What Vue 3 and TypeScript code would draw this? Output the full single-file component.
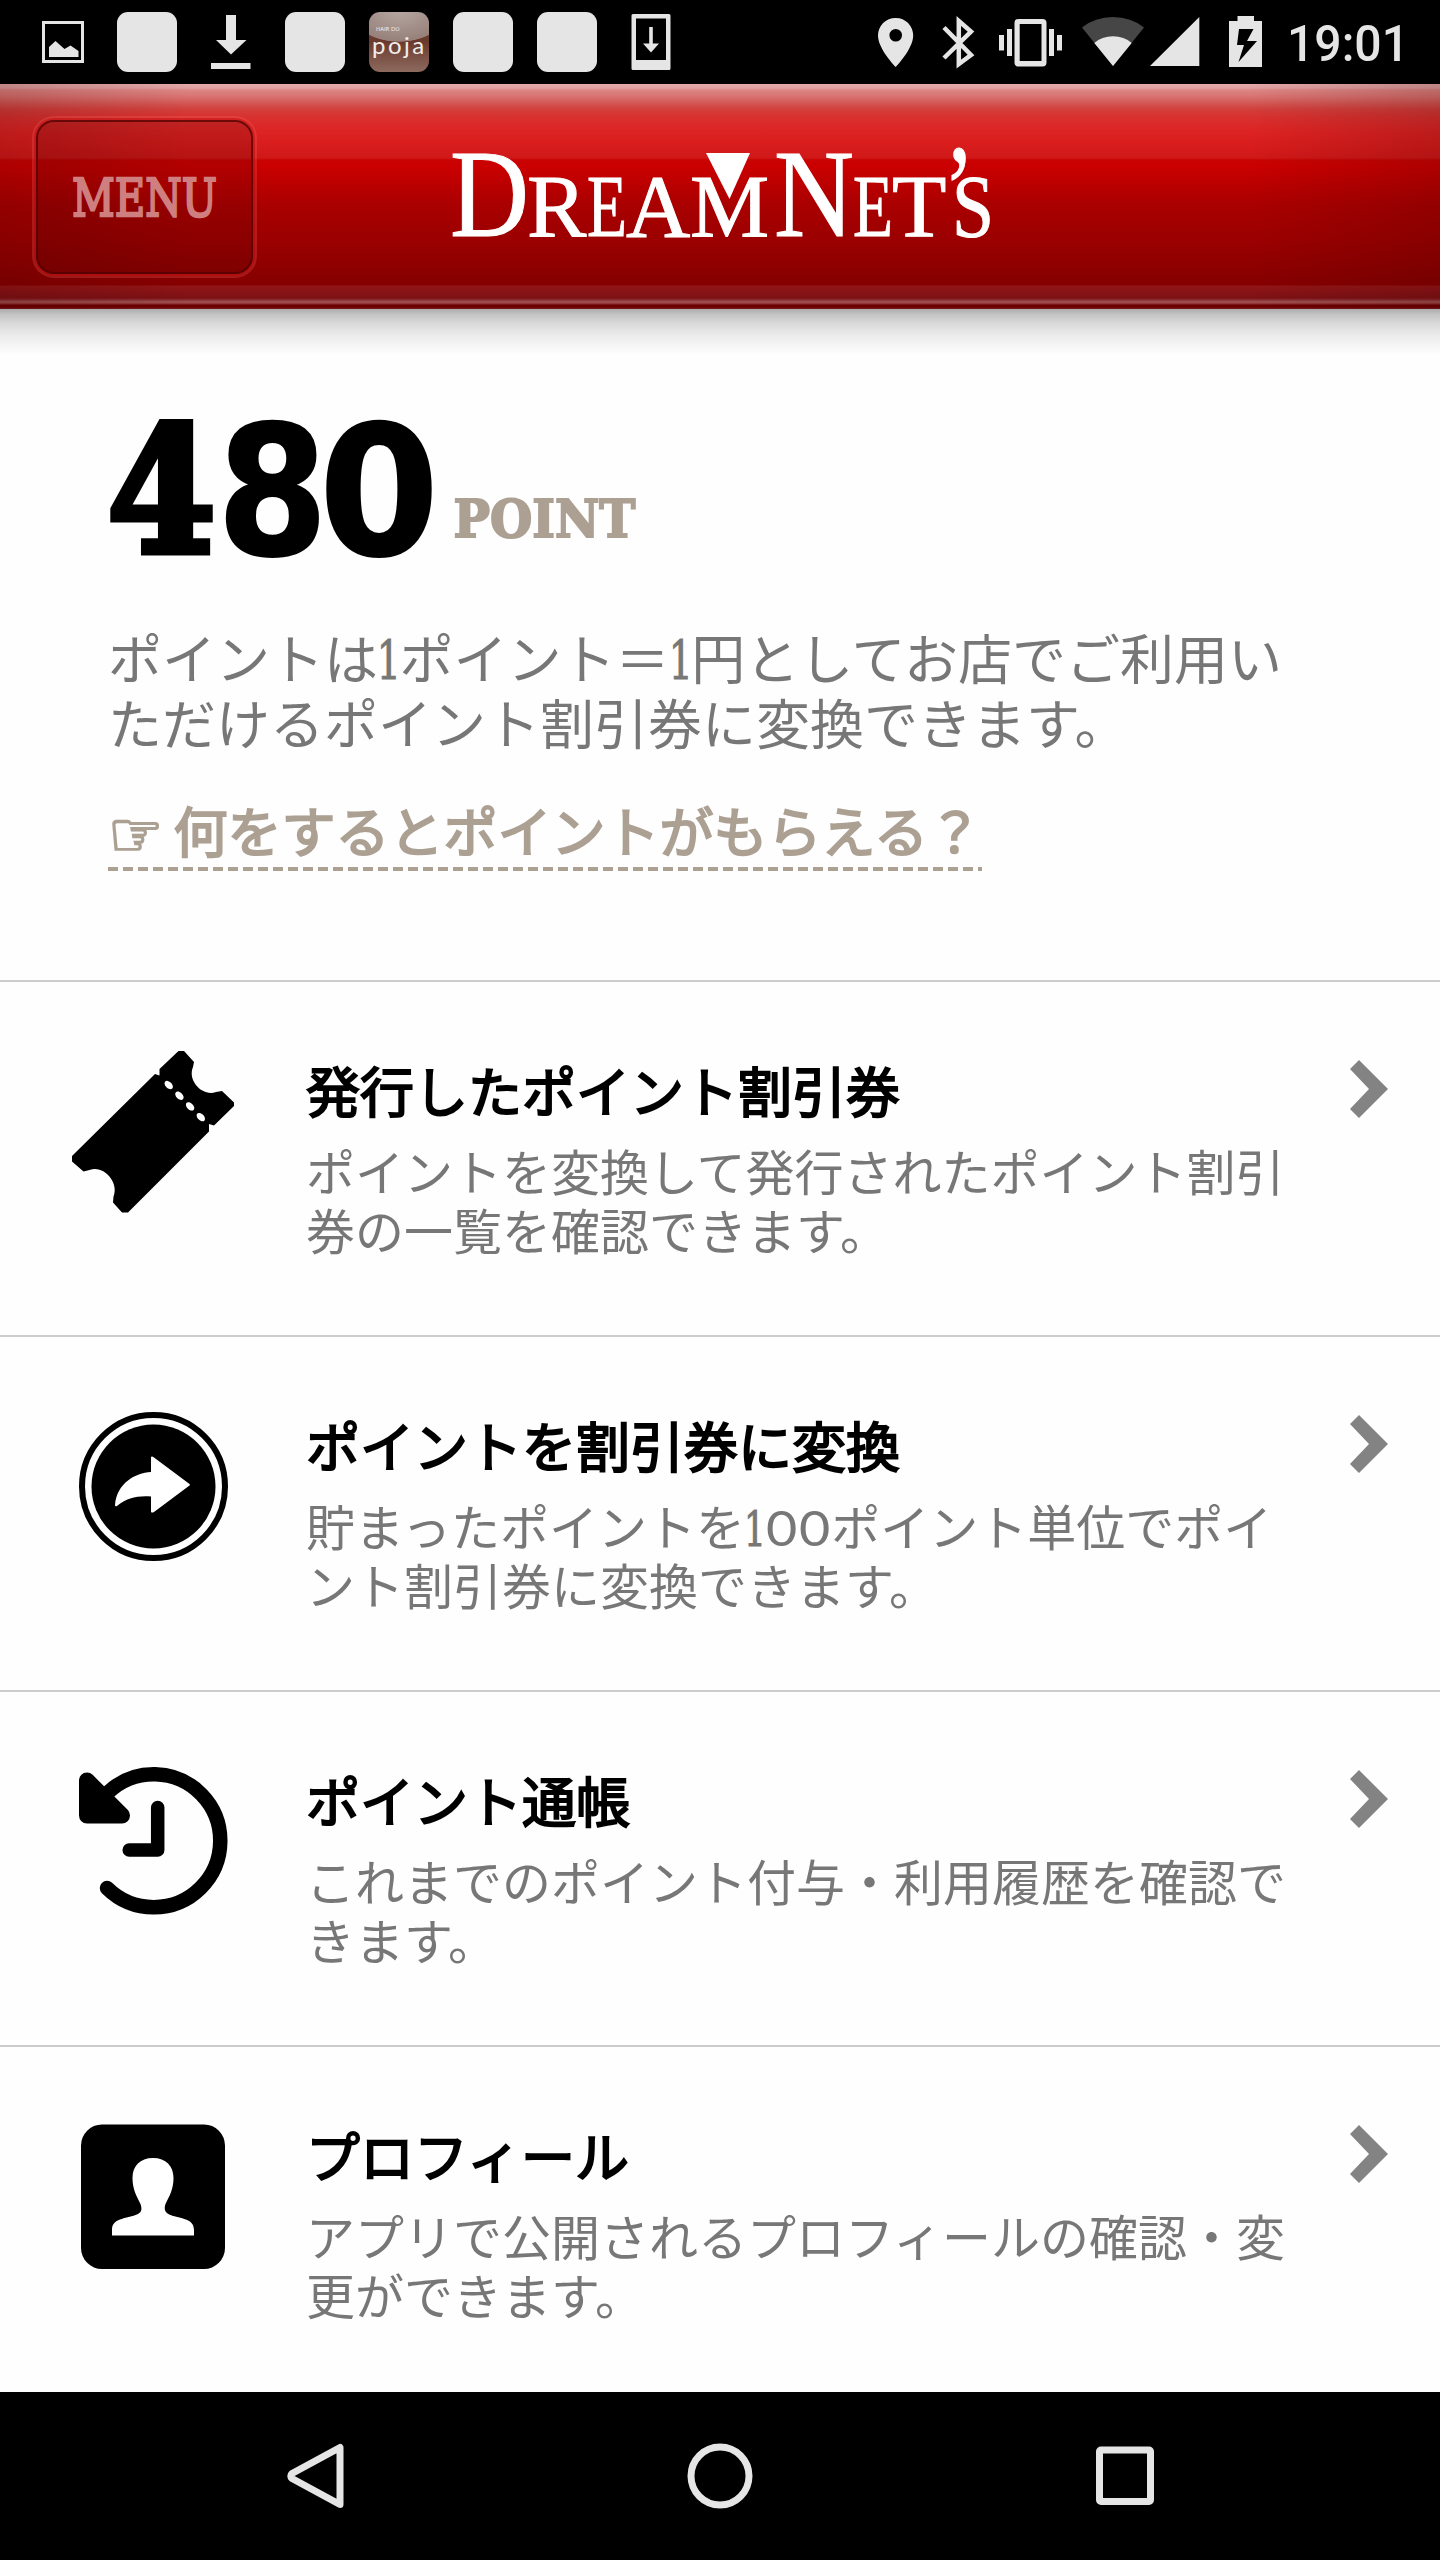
<script setup lang="ts">
interface MenuRow {
  icon: 'ticket' | 'convert' | 'history' | 'profile'
  title: string
  lines: string[]
}

const rows: MenuRow[] = [
  { icon: 'ticket', title: '発行したポイント割引券', lines: ['ポイントを変換して発行されたポイント割引', '券の一覧を確認できます。'] },
  { icon: 'convert', title: 'ポイントを割引券に変換', lines: ['貯まったポイントを100ポイント単位でポイ', 'ント割引券に変換できます。'] },
  { icon: 'history', title: 'ポイント通帳', lines: ['これまでのポイント付与・利用履歴を確認で', 'きます。'] },
  { icon: 'profile', title: 'プロフィール', lines: ['アプリで公開されるプロフィールの確認・変', '更ができます。'] },
]

const intro: string[] = ['ポイントは1ポイント＝1円としてお店でご利用い', 'ただけるポイント割引券に変換できます。']

// Splits a line so that every digit can take the slab numeral style.
const pieces = (line: string): string[] => line.split(/(\d)/).filter((p) => p !== '')
const digitClass = (p: string): string => (/^\d$/.test(p) ? (p === '1' ? 'one' : 'zero') : 'run')
</script>

<template>
  <div class="screen">
    <div class="status">
      <div class="notes">
        <span class="cell">
          <svg width="42" height="42" viewBox="0 0 42 42"><rect x="1.5" y="1.5" width="39" height="39" fill="none" stroke="#e5e5e5" stroke-width="3" /><path d="M7 26l6.500-6 9 8 6-3.500 8 5.500v6H7z" fill="#e5e5e5" /></svg>
        </span>
        <span class="cell"><i class="blank"></i></span>
        <span class="cell">
          <svg width="40" height="54" viewBox="0 0 40 54"><path d="M15 0h10v25h10.500L20 39.500 5 25h10zM0 48h39.500v6H0z" fill="#e5e5e5" /></svg>
        </span>
        <span class="cell"><i class="blank"></i></span>
        <span class="cell"><span class="poja"><small>HAIR DO</small><b>poja</b></span></span>
        <span class="cell"><i class="blank"></i></span>
        <span class="cell"><i class="blank"></i></span>
        <span class="cell">
          <svg width="40" height="56" viewBox="0 0 40 56"><path fill-rule="evenodd" d="M2 0h36q1.500 0 1.500 1.500v53q0 1.500-1.500 1.500H2q-1.500 0-1.500-1.500v-53Q.5 0 2 0zM5 4.500V46h30V4.500z" fill="#e5e5e5" /><path d="M18.200 13h3.600v16.500h6.200l-8 9-8-9h6.200z" fill="#e5e5e5" /></svg>
        </span>
      </div>
      <div class="system">
        <svg width="528" height="84" viewBox="878 0 528 84" fill="#e5e5e5">
          <path fill-rule="evenodd" d="M895.700 18c-10 0-17.700 7.800-17.700 17.500C878 49 895.700 67 895.700 67s17.500-18 17.500-31.500c0-9.700-7.700-17.500-17.500-17.500zm0 11a6.300 6.300 0 1 1 0 12.600 6.300 6.300 0 0 1 0-12.600z" />
          <path d="M944 27.500l27 27.500-12.200 9V21l12.200 10.500L944 58" fill="none" stroke="#e5e5e5" stroke-width="4.500" />
          <path fill-rule="evenodd" d="M1018.500 19h24q4 0 4 4v39.500q0 4-4 4h-24q-4 0-4-4V23q0-4 4-4zm1.200 5v37h21.800V24zM999 35h5v15.500h-5zM1007 29h5v27h-5zM1049 29h5v27h-5zM1057 35h5v15.500h-5z" />
          <path d="M1113 66l-31-38.500q13-10.500 31-10.500t31 10.500z" fill="#464646" />
          <path d="M1113 66l-18.700-23q7.500-6.700 18.700-6.700t18.700 6.700z" />
          <path d="M1199.300 17v49H1150z" />
          <path fill-rule="evenodd" d="M1237.500 16h16.500v5h8v46h-33V21h8.500zM1239 29l-2 16h7l-5.500 17 18.500-21h-10l6.500-12z" />
          <text x="1287" y="61.300" font-family="Roboto, sans-serif" font-size="49.500" font-weight="500" textLength="122" lengthAdjust="spacingAndGlyphs">19:01</text>
        </svg>
      </div>
    </div>

    <header class="bar">
      <button class="menu">
        <svg width="150" height="60" viewBox="-2 -8 150 60"><text x="0" y="41" font-family="'DejaVu Serif', serif" font-size="53" textLength="145" lengthAdjust="spacingAndGlyphs" fill="#cf7f7f" stroke="#cf7f7f" stroke-width="2.400">MENU</text></svg>
      </button>
      <svg class="logo" width="546" height="100" viewBox="448 142 546 100">
        <text y="236" font-family="'Liberation Serif', serif" fill="#fff" stroke="#fff" stroke-width="1"><tspan x="450" font-size="124" textLength="79" lengthAdjust="spacingAndGlyphs">D</tspan><tspan x="527" font-size="89">R</tspan><tspan x="587" font-size="89" textLength="40" lengthAdjust="spacingAndGlyphs">E</tspan><tspan x="626" font-size="89">A</tspan><tspan x="690" font-size="89">M</tspan><tspan x="774" font-size="124" textLength="80" lengthAdjust="spacingAndGlyphs">N</tspan><tspan x="853" font-size="89" textLength="40" lengthAdjust="spacingAndGlyphs">E</tspan><tspan x="892" font-size="89">T</tspan><tspan x="944" y="231" font-size="124" textLength="30" lengthAdjust="spacingAndGlyphs">’</tspan><tspan x="952" y="236" font-size="89" textLength="42" lengthAdjust="spacingAndGlyphs">S</tspan></text>
        <path d="M706 153h44l-20.500 46z" fill="#fff" />
      </svg>
    </header>

    <main>
      <section class="summary">
        <svg class="points" width="540" height="150" viewBox="108 415 540 150">
          <text y="555" font-size="182" font-weight="700" font-family="'DejaVu Sans', sans-serif" fill="#000"><tspan x="107" y="552" font-size="175" font-family="'DejaVu Serif', serif" textLength="109" lengthAdjust="spacingAndGlyphs" stroke="#000" stroke-width="7">4</tspan><tspan x="217" y="554" font-size="180" textLength="111" lengthAdjust="spacingAndGlyphs" stroke="#000" stroke-width="2">8</tspan><tspan x="319" y="554" font-size="180" textLength="120" lengthAdjust="spacingAndGlyphs" stroke="#000" stroke-width="2">0</tspan></text>
          <text x="453.500" y="537" font-size="53" font-weight="700" font-family="'DejaVu Serif', serif" fill="#aca093" stroke="#aca093" stroke-width="2" textLength="182" lengthAdjust="spacingAndGlyphs">POINT</text>
        </svg>
        <p class="intro">
          <span v-for="line in intro" :key="line" class="line"><span v-for="(p, i) in pieces(line)" :key="i" :class="digitClass(p)">{{ p }}</span></span>
        </p>
        <a class="how"><span class="hand">☞</span>何をするとポイントがもらえる？</a>
      </section>

      <section v-for="row in rows" :key="row.title" class="row">
        <div class="pic">
          <svg v-if="row.icon === 'ticket'" width="186" height="186" viewBox="60 1039 186 186">
            <path d="M178.500 1051h5.500l10 11-1 5c-6 14 10 30 23 25l6-1 12 11.500v3.500l-20 19.500-5-1.500 0 7.500-81 81h-6l-9-10 .5-6c6-14-10-32-24-26.500l-6 1.500-11.500-10v-5.500l83-82 4.500 1.500v-6.500z" />
            <g fill="#fff"><ellipse v-for="n in 4" :key="n" :cx="158 + n * 10.700" :cy="1074.300 + n * 10.700" rx="5" ry="3.200" :transform="`rotate(45 ${158 + n * 10.700} ${1074.300 + n * 10.700})`" /></g>
          </svg>
          <svg v-else-if="row.icon === 'convert'" width="186" height="186" viewBox="60 1394 186 186">
            <circle cx="153.500" cy="1486.500" r="71.500" fill="none" stroke="#000" stroke-width="6" />
            <circle cx="153.500" cy="1486.500" r="62" />
            <path d="M151 1457q1-1 3 .5l35.500 26.500q1 1 0 1.500L154 1512q-2 1-3 0v-15.500c-14-1-24 1.500-34 9.500q-2 1-2-1c2-22 20-32 36-33z" fill="#fff" />
          </svg>
          <svg v-else-if="row.icon === 'history'" width="186" height="186" viewBox="60 1749 186 186" fill="none" stroke="#000" stroke-linecap="round" stroke-linejoin="round">
            <path d="M108 1792.500a66.500 66.500 0 1 1-1 95.500" stroke-width="14.500" />
            <path d="M87 1780.500v35h35z" fill="#000" stroke-width="16" />
            <path d="M157.700 1807.500v42.500h-28.500" stroke-width="13.500" />
          </svg>
          <svg v-else width="186" height="186" viewBox="60 2104 186 186">
            <rect x="81" y="2124.500" width="144" height="144.500" rx="21" />
            <path d="M153 2158c13 0 20.500 8 20.500 20 0 11-4 18-8 26-2 6 0 9 5 11 10 4 23.500 3 23.500 15v5.500h-82V2230c0-12 13.500-11 23.500-15 6-2 7-5 5-11-4-8-8-15-8-26 0-12 7.500-20 20.500-20z" fill="#fff" />
          </svg>
        </div>
        <div class="text">
          <h2>{{ row.title }}</h2>
          <p><span v-for="line in row.lines" :key="line" class="line"><span v-for="(p, i) in pieces(line)" :key="i" :class="digitClass(p)">{{ p }}</span></span></p>
        </div>
        <svg class="chevron" width="38" height="58" viewBox="0 0 38 58"><path d="M9 0l29 29L9 58l-9-9 19-20L0 9z" fill="#838383" /></svg>
      </section>
    </main>

    <nav class="keys">
      <svg width="57" height="66" viewBox="0 0 57 66"><path d="M53 4.500v57L5 35.500q-2.500-2.500 0-5z" fill="none" stroke="#e5e5e5" stroke-width="7" stroke-linejoin="round" /></svg>
      <svg width="66" height="66" viewBox="0 0 66 66"><circle cx="33" cy="33" r="29" fill="none" stroke="#e5e5e5" stroke-width="7" /></svg>
      <svg width="58" height="60" viewBox="0 0 58 60"><rect x="3.500" y="4" width="51" height="51.500" rx="1.500" fill="none" stroke="#e5e5e5" stroke-width="7" /></svg>
    </nav>
  </div>
</template>

<style>
body {
  background: #fefefe;
}
</style>

<style scoped>
.screen {
  width: 1440px;
  height: 2560px;
  display: flex;
  flex-direction: column;
  overflow: hidden;
  background: #fefefe;
  font-family: 'Noto Sans CJK JP', sans-serif;
}
svg {
  display: block;
  flex: none;
}
.status {
  height: 84px;
  flex: none;
  background: #000;
  display: flex;
  justify-content: space-between;
  padding: 0 34px 0 21px;
}
.system svg {
  overflow: visible;
}
.notes {
  display: flex;
}
.cell {
  width: 84px;
  height: 84px;
  display: flex;
  align-items: center;
  justify-content: center;
}
.blank {
  width: 60px;
  height: 60px;
  border-radius: 11px;
  background: #e5e5e5;
}
.poja {
  width: 60px;
  height: 60px;
  border-radius: 11px;
  overflow: hidden;
  background: radial-gradient(ellipse 50px 34px at 50% -4px, #b8aaa5 0, #97807a 98%, transparent 100%), linear-gradient(#6b3a2e 50%, #8d6a5e);
  color: #f0eeec;
  display: flex;
  flex-direction: column;
}
.poja small {
  font-family: 'DejaVu Sans', sans-serif;
  font-size: 5.500px;
  line-height: 7px;
  padding: 14px 0 0 7px;
  white-space: nowrap;
}
.poja b {
  font-family: Lato, sans-serif;
  font-weight: 400;
  font-size: 24px;
  line-height: 24px;
  letter-spacing: 2.500px;
  padding-left: 3px;
}
.bar {
  position: relative;
  z-index: 1;
  height: 225px;
  flex: none;
  display: flex;
  align-items: flex-start;
  background:
    linear-gradient(90deg, rgba(60, 0, 0, 0.2), transparent 190px, transparent 1250px, rgba(60, 0, 0, 0.2)),
    linear-gradient(
      #e4a9a9 0, #e0a0a0 4px, #dc8684 6px, #d8716f 13px, #d35855 19px, #d2403d 25px, #d73230 32px, #dd2424 46px,
      #d91d1d 60px, #d01818 74px, #c90303 76px, #cb0000 82px, #b60000 106px, #a90000 122px, #9c0000 155px,
      #850000 201px, #921517 202px, #7c1114 214px, #8b3032 216px, #a15556 218px, #8e2c2d 220px, #6c0000 221px, #6a0000 223px, #801f1f 225px
    );
}
.bar::after {
  content: '';
  position: absolute;
  left: 0;
  right: 0;
  top: 225px;
  height: 46px;
  background: linear-gradient(#acacac, #c4c4c4 12%, #d8d8d8 30%, #ececec 58%, rgba(254, 254, 254, 0));
}
.menu {
  box-sizing: border-box;
  width: 217px;
  height: 154px;
  margin: 36px 0 0 36px;
  padding: 0;
  border: 2.500px solid rgba(80, 0, 0, 0.75);
  border-radius: 18px;
  background: rgba(70, 0, 0, 0.18);
  box-shadow: 0 0 0 2px rgba(190, 0, 0, 0.45), 0 0 0 4px rgba(255, 110, 110, 0.24);
  display: flex;
  justify-content: center;
  align-items: center;
}
.logo {
  margin: 58px 0 0 195px;
}
main {
  height: 2083px;
  flex: none;
  overflow: hidden;
}
.summary {
  height: 671px;
  padding: 106px 108px 0;
  box-sizing: border-box;
}
.line {
  display: block;
  white-space: nowrap;
}
.intro {
  margin: 59px 0 0;
  font-size: 54px;
  line-height: 65px;
  color: #777;
}
.one,
.zero {
  display: inline-flex;
  justify-content: center;
  width: 0.4em;
  font-family: 'DejaVu Serif', serif;
  line-height: 1;
}
.one {
  transform: scaleX(0.7);
  -webkit-text-stroke: 1px #777;
}
.zero {
  width: 0.68em;
  font-family: Lato, sans-serif;
  transform: scaleX(1.1);
}
.how {
  display: flex;
  width: 874px;
  height: 74px;
  margin-top: 43px;
  font-size: 54px;
  line-height: 66px;
  color: #aca093;
  -webkit-text-stroke: 2px #aca093;
  white-space: nowrap;
  background: repeating-linear-gradient(90deg, #aca093 0, #aca093 10px, transparent 10px, transparent 15px) 0 100% / 100% 4px no-repeat;
}
.hand {
  width: 66.500px;
  padding-top: 5px;
  box-sizing: border-box;
  font-family: 'DejaVu Sans', sans-serif;
  font-size: 62px;
}
.row {
  height: 355px;
  box-sizing: border-box;
  border-top: 2px solid #ccc;
  display: flex;
  align-items: flex-start;
}
.pic {
  width: 246px;
  padding: 57px 0 0 60px;
}
.text {
  width: 1044px;
  padding-top: 75px;
}
h2 {
  margin: 0;
  font-size: 54px;
  line-height: 65px;
  font-weight: 400;
  -webkit-text-stroke: 2px #000;
  color: #000;
}
.text p {
  margin: 18px 0 0;
  font-size: 49px;
  line-height: 59px;
  color: #777;
}
.chevron {
  margin-top: 78px;
}
.keys {
  height: 168px;
  flex: none;
  background: #000;
  display: flex;
  align-items: center;
  gap: 343px;
  padding-left: 287px;
}
</style>
